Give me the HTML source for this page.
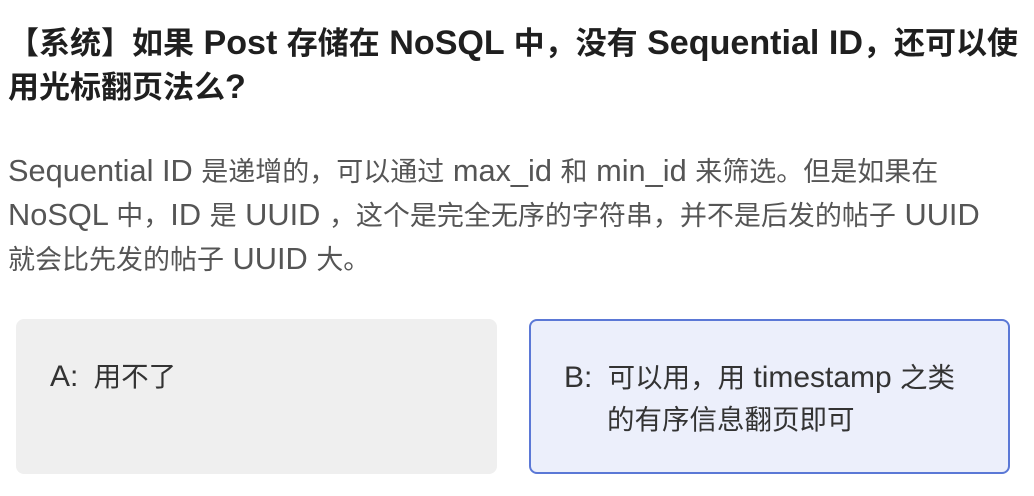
<!DOCTYPE html>
<html><head><meta charset="utf-8"><style>
body{margin:0;width:1034px;height:496px;background:#fff;font-family:"Liberation Sans","Noto Sans CJK SC",sans-serif;overflow:hidden;position:relative}
i{font-style:normal;line-height:1}
.t{position:absolute;left:8px;top:22px;font-size:31px;font-weight:bold;color:#1f1f1f;line-height:44px;white-space:nowrap}
.t i{font-size:1.1em}
.b{position:absolute;left:8px;top:150px;font-size:27px;color:#555;line-height:44px;white-space:nowrap}
.b i{font-size:1.14em}
.c i{font-size:1.09em}
.c{position:absolute;top:319px;width:481px;height:155px;border-radius:8px;box-sizing:border-box;font-size:27.5px;color:#333;line-height:42px;white-space:nowrap}
.a{left:16px;background:#efefef}
.bb{left:529px;background:#eceffb;border:2px solid #5b78d6}
</style></head><body>
<div class="t">【系统】如果<i> Post </i>存储在<i> NoSQL </i>中，没有<i> Sequential ID</i>，还可以使<br>用光标翻页法么<i>?</i></div>
<div class="b"><i>Sequential ID </i>是递增的，可以通过<i> max_id </i>和<i> min_id </i>来筛选。但是如果在<br><i>NoSQL </i>中，<i>ID </i>是<i> UUID </i>，这个是完全无序的字符串，并不是后发的帖子<i> UUID</i><br>就会比先发的帖子<i> UUID </i>大。</div>
<div class="c a"><div style="position:absolute;left:34px;top:37px"><i>A:</i>&nbsp; 用不了</div></div>
<div class="c bb"><div style="position:absolute;left:33px;top:36px"><i>B:</i>&nbsp; 可以用，用<i> timestamp </i>之类<br><span style="padding-left:43px">的有序信息翻页即可</span></div></div>
</body></html>
